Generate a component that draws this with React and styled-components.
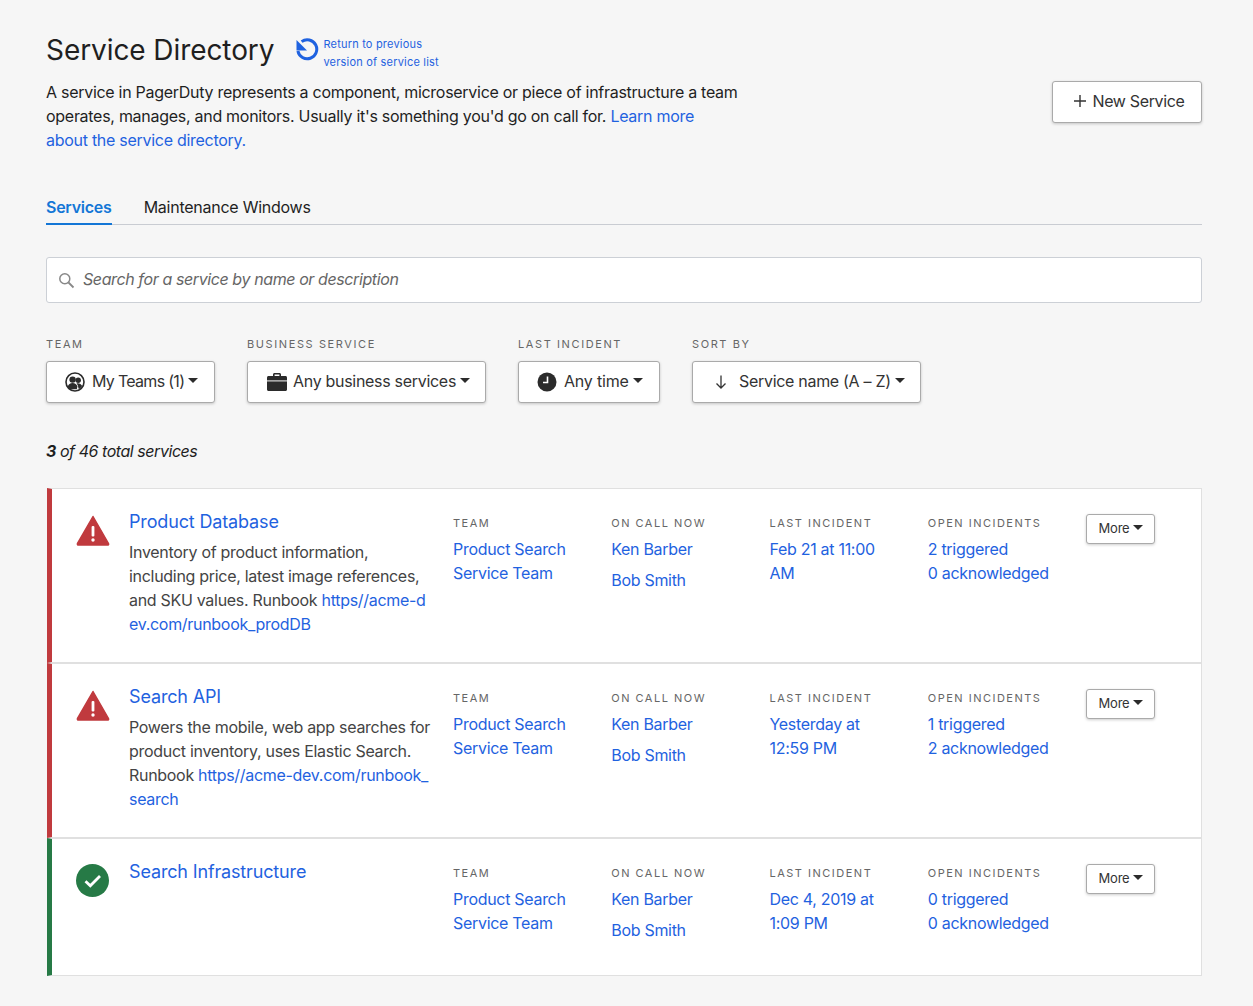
import styled, { createGlobalStyle } from "styled-components"

const services = [
    {
        name: "Product Database",
        status: "alert",
        text: "Inventory of product information, including price, latest image references, and SKU values. Runbook ",
        link: "https//acme-dev.com/runbook_prodDB",
        last: "Feb 21 at 11:00 AM",
        triggered: "2 triggered",
        acknowledged: "0 acknowledged",
    },
    {
        name: "Search API",
        status: "alert",
        text: "Powers the mobile, web app searches for product inventory, uses Elastic Search. Runbook ",
        link: "https//acme-dev.com/runbook_search",
        last: "Yesterday at 12:59 PM",
        triggered: "1 triggered",
        acknowledged: "2 acknowledged",
    },
    {
        name: "Search Infrastructure",
        status: "ok",
        last: "Dec 4, 2019 at 1:09 PM",
        triggered: "0 triggered",
        acknowledged: "0 acknowledged",
    },
]

const filters = [
    { label: "TEAM", value: "My Teams (1)", icon: <TeamIcon />, width: 169, gap: 7, tracking: -0.7 },
    { label: "BUSINESS SERVICE", value: "Any business services", icon: <BriefcaseIcon />, width: 239, gap: 5, tracking: -0.3 },
    { label: "LAST INCIDENT", value: "Any time", icon: <ClockIcon />, width: 142, gap: 7, tracking: -0.2 },
    { label: "SORT BY", value: "Service name (A – Z)", icon: <ArrowIcon />, width: 229, gap: 8, tracking: -0.3 },
]

function TeamIcon() {
    return (
        <svg width="20" height="20" viewBox="0 0 20 20">
            <circle cx="10" cy="10" r="9" fill="#fff" stroke="#2b2b2b" strokeWidth="1.6" />
            <circle cx="7.6" cy="7.6" r="3.2" fill="#2b2b2b" />
            <circle cx="13.2" cy="8.2" r="2.7" fill="#2b2b2b" />
            <path d="M2.800 14.500c.5-2.300 2.400-3.600 4.800-3.600s4.300 1.300 4.800 3.600l-.6 2.800H4z" fill="#2b2b2b" />
            <path d="M11.500 11.400c2.300-.6 4.800.4 5.700 2.700l-2.300 2.600-1.500-.2c0-2-.7-3.800-1.900-5.100z" fill="#2b2b2b" />
        </svg>
    )
}

function BriefcaseIcon() {
    return (
        <svg width="22" height="20" viewBox="0 0 22 20">
            <path d="M7 4V2.500C7 1.700 7.700 1 8.500 1h5c.8 0 1.500.7 1.500 1.500V4h-1.600V2.600H8.600V4z" fill="#2b2b2b" />
            <path d="M1 5.500C1 4.700 1.700 4 2.500 4h17c.8 0 1.500.7 1.500 1.500V8H1z" fill="#2b2b2b" />
            <rect x="1" y="8" width="20" height="1.500" fill="#a5a5a5" />
            <path d="M1 9.500h20v8c0 .8-.7 1.500-1.500 1.500h-17C1.700 19 1 18.300 1 17.500z" fill="#2b2b2b" />
        </svg>
    )
}

function ClockIcon() {
    return (
        <svg width="20" height="20" viewBox="0 0 20 20">
            <circle cx="10" cy="10" r="9.500" fill="#2b2b2b" />
            <path d="M10.500 4.500v6H6" fill="none" stroke="#fff" strokeWidth="1.600" />
        </svg>
    )
}

function ArrowIcon() {
    return (
        <svg width="20" height="16" viewBox="0 0 20 16">
            <path d="M10 1.500v12.500M5.500 9.500 10 14l4.500-4.500" fill="none" stroke="#333" strokeWidth="1.300" />
        </svg>
    )
}

function SearchIcon() {
    return (
        <svg width="17" height="17" viewBox="0 0 17 17">
            <circle cx="6.800" cy="6.800" r="5" fill="none" stroke="#888" strokeWidth="1.500" />
            <path d="M10.500 10.500 15.500 15.500" stroke="#888" strokeWidth="1.800" />
        </svg>
    )
}

function UndoIcon() {
    return (
        <UndoSvg width="23" height="23" viewBox="0 0 23 23">
            <path d="M5.600 3.600A9.500 9.500 0 1 1 1.900 13" fill="none" stroke="#1f62e0" strokeWidth="3" />
            <path d="M.5 2 .5 12.500 11 12.500Z" fill="#1f62e0" />
        </UndoSvg>
    )
}

function PlusIcon() {
    return (
        <svg width="12" height="12" viewBox="0 0 12 12">
            <path d="M6 0v12M0 6h12" stroke="#333" strokeWidth="1.400" />
        </svg>
    )
}

function AlertIcon() {
    return (
        <svg width="34" height="31" viewBox="0 0 34 31">
            <path d="M17 1.500 32.500 28.500a1 1 0 0 1-.9 1.500H2.400a1 1 0 0 1-.9-1.500z" fill="#c03a3e" stroke="#c03a3e" strokeWidth="1.500" strokeLinejoin="round" />
            <rect x="15.600" y="11" width="2.800" height="10.500" rx="1" fill="#fff" />
            <circle cx="17" cy="25" r="1.700" fill="#fff" />
        </svg>
    )
}

function OkIcon() {
    return (
        <svg width="33" height="33" viewBox="0 0 33 33">
            <circle cx="16.500" cy="16.500" r="16.500" fill="#267a46" />
            <path d="M9.500 17.200 14.300 21.800 24 12" fill="none" stroke="#fff" strokeWidth="2.800" />
        </svg>
    )
}

const App = () => {
    return (
        <Page>
            <GlobalStyle />
            <Header>
                <Intro>
                    <TitleRow>
                        <Title>Service Directory</Title>
                        <ReturnLink href="#">
                            <UndoIcon />
                            <ReturnText>Return to previous<br />version of service list</ReturnText>
                        </ReturnLink>
                    </TitleRow>
                    <Description>
                        A service in PagerDuty represents a component, microservice or piece of infrastructure a team
                        operates, manages, and monitors. Usually it's something you'd go on call for.{" "}
                        <Link href="#">Learn more about the service directory.</Link>
                    </Description>
                </Intro>
                <NewServiceButton>
                    <PlusIcon />
                    New Service
                </NewServiceButton>
            </Header>

            <Tabs>
                <Tab $active>Services</Tab>
                <Tab>Maintenance Windows</Tab>
            </Tabs>

            <SearchBox>
                <SearchIcon />
                <SearchInput placeholder="Search for a service by name or description" />
            </SearchBox>

            <Filters>
                {filters.map((filter) => (
                    <Filter key={filter.label}>
                        <FilterLabel>{filter.label}</FilterLabel>
                        <FilterButton $width={filter.width} $gap={filter.gap}>
                            {filter.icon}
                            <FilterValue $tracking={filter.tracking}>
                                {filter.value}
                                <Caret />
                            </FilterValue>
                        </FilterButton>
                    </Filter>
                ))}
            </Filters>

            <Total><b>3</b> of 46 total services</Total>

            <List>
                {services.map((service) => (
                    <Card key={service.name} $status={service.status}>
                        <StatusCell $status={service.status}>
                            {service.status === "alert" ? <AlertIcon /> : <OkIcon />}
                        </StatusCell>
                        <div>
                            <ServiceName href="#">{service.name}</ServiceName>
                            {service.text && (
                                <ServiceText>
                                    {service.text}
                                    <Link href="#">{service.link}</Link>
                                </ServiceText>
                            )}
                        </div>
                        <Column>
                            <Label>TEAM</Label>
                            <Link href="#">Product Search Service Team</Link>
                        </Column>
                        <Column>
                            <Label>ON CALL NOW</Label>
                            <OnCall href="#">Ken Barber</OnCall>
                            <OnCall href="#">Bob Smith</OnCall>
                        </Column>
                        <Column>
                            <Label>LAST INCIDENT</Label>
                            <LastIncident href="#">{service.last}</LastIncident>
                        </Column>
                        <Column>
                            <Label>OPEN INCIDENTS</Label>
                            <Stacked href="#">{service.triggered}</Stacked>
                            <Stacked href="#">{service.acknowledged}</Stacked>
                        </Column>
                        <MoreButton>More<Caret /></MoreButton>
                    </Card>
                ))}
            </List>
        </Page>
    )
}

export default App

const GlobalStyle = createGlobalStyle`
    body {
        margin: 0;
        background: #f6f6f6;
        color: #1f1f1f;
        font-family: "Inter", "Liberation Sans", sans-serif;
        font-size: 16px;
        line-height: 24px;
    }
`

const Page = styled.div`
    padding: 30px 51px 30px 46px;
`

const Header = styled.div`
    display: flex;
    justify-content: space-between;
    align-items: flex-start;
`

const Intro = styled.div`
    width: 693px;
`

const TitleRow = styled.div`
    display: flex;
    align-items: flex-start;
    gap: 22px;
    margin-bottom: 9px;
`

const Title = styled.h1`
    margin: 0;
    font-size: 28px;
    font-weight: 400;
    line-height: 40px;
    letter-spacing: -0.08px;
`

const ReturnLink = styled.a`
    display: flex;
    align-items: flex-start;
    gap: 4px;
    margin-top: 5px;
    text-decoration: none;
`

const UndoSvg = styled.svg`
    margin-top: 3px;
`

const ReturnText = styled.span`
    color: #1f62e0;
    font-size: 11px;
    line-height: 18px;
    letter-spacing: 0.2px;
`

const Description = styled.p`
    margin: 0;
    line-height: 24px;
    letter-spacing: -0.28px;
`

const Link = styled.a`
    color: #1f62e0;
    text-decoration: none;
`

const buttonBase = `
    background: #fff;
    border: 1px solid #aaa;
    border-radius: 3px;
    box-shadow: 0 1px 3px rgba(0, 0, 0, 0.2);
    color: #333;
    font-family: inherit;
    display: flex;
    align-items: center;
`

const NewServiceButton = styled.button`
    ${buttonBase}
    justify-content: center;
    gap: 6px;
    width: 150px;
    height: 42px;
    margin-top: 51px;
    padding: 0 0 2px 5px;
    font-size: 16px;
    letter-spacing: -0.35px;
`

const Tabs = styled.div`
    display: flex;
    gap: 32px;
    margin-top: 41px;
    border-bottom: 1px solid #c9ccd2;
`

const Tab = styled.div`
    padding-bottom: 2px;
    margin-bottom: -1px;
    line-height: 28px;
    font-weight: ${(p) => (p.$active ? 600 : 400)};
    color: ${(p) => (p.$active ? "#1376d6" : "#1f1f1f")};
    border-bottom: 2px solid ${(p) => (p.$active ? "#1376d6" : "transparent")};
    letter-spacing: -0.25px;
`

const SearchBox = styled.div`
    display: flex;
    align-items: center;
    gap: 8px;
    height: 44px;
    margin-top: 32px;
    padding: 0 11px;
    background: #fff;
    border: 1px solid #ccd0d6;
    border-radius: 3px;
`

const SearchInput = styled.input`
    flex: 1;
    border: 0;
    outline: 0;
    padding: 0 0 2px;
    background: transparent;
    font-family: inherit;
    font-size: 16px;
    font-style: italic;
    letter-spacing: -0.4px;

    &::placeholder {
        color: #666;
        opacity: 1;
    }
`

const Filters = styled.div`
    display: flex;
    gap: 32px;
    margin-top: 33px;
`

const Filter = styled.div`
    display: flex;
    flex-direction: column;
`

const Label = styled.div`
    color: #666;
    font-size: 11px;
    line-height: 16px;
    letter-spacing: 1.5px;
`

const FilterLabel = styled(Label)`
    letter-spacing: 1.6px;
`

const FilterButton = styled.button`
    ${buttonBase}
    gap: ${(p) => p.$gap}px;
    width: ${(p) => p.$width}px;
    height: 42px;
    margin-top: 9px;
    padding: 0 0 0 18px;
    font-size: 16px;
`

const FilterValue = styled.span`
    display: flex;
    align-items: center;
    gap: 4px;
    padding-bottom: 2px;
    letter-spacing: ${(p) => p.$tracking}px;
`

const Caret = styled.span`
    width: 0;
    height: 0;
    margin-top: -2px;
    border-left: 5px solid transparent;
    border-right: 5px solid transparent;
    border-top: 5px solid #2b2b2b;
`

const Total = styled.div`
    margin-top: 36px;
    font-style: italic;
    letter-spacing: -0.45px;

    b {
        font-weight: 700;
    }
`

const List = styled.div`
    margin-top: 25px;
    margin-left: 1px;
`

const Card = styled.div`
    display: grid;
    grid-template-columns: 77px 324px repeat(4, 158.25px) 69px;
    background: #fff;
    border: 1px solid #e0e0e0;
    border-left: 5px solid ${(p) => (p.$status === "alert" ? "#c03a3e" : "#267a46")};
    padding: 21px 0 26px;
    min-height: 137px;
    box-sizing: border-box;
    letter-spacing: -0.3px;
`

const StatusCell = styled.div`
    padding: ${(p) => (p.$status === "alert" ? "5px" : "4px")} 0 0 24px;
`

const ServiceName = styled(Link)`
    display: block;
    font-size: 18px;
    line-height: 24px;
    letter-spacing: -0.15px;
`

const ServiceText = styled.p`
    margin: 6px 20px 0 0;
    color: #444;

    ${Link} {
        word-break: break-all;
    }
`

const Column = styled.div`
    display: flex;
    flex-direction: column;
    align-items: flex-start;
    padding-right: 20px;

    ${Label} {
        margin: 5px 0 6px;
    }
`

const OnCall = styled(Link)`
    display: block;
    margin-bottom: 7px;
`

const Stacked = styled(Link)`
    display: block;
`

const LastIncident = styled(Link)`
    max-width: 112px;
`

const MoreButton = styled.button`
    ${buttonBase}
    justify-content: center;
    gap: 3px;
    height: 30px;
    margin-top: 4px;
    padding: 0 0 2px;
    font-size: 13px;
    letter-spacing: -0.2px;
`
